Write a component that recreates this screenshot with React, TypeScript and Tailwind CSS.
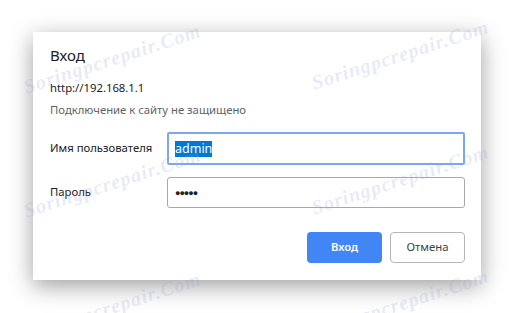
import React from "react";

const marks = [
  { left: 24, top: 72 },
  { left: 312, top: 68 },
  { left: 24, top: 196 },
  { left: 312, top: 193 },
  { left: 24, top: 320 },
  { left: 312, top: 317 },
];

function Watermark({ left, top }: { left: number; top: number }) {
  return (
    <div
      className="pointer-events-none absolute origin-left -rotate-[18deg] whitespace-nowrap text-[20px] font-bold italic tracking-[1px] text-[rgba(150,168,220,0.24)] [font-family:'Liberation_Serif',serif]"
      style={{ left, top }}
    >
      Soringpcrepair.Com
    </div>
  );
}

export default function App() {
  return (
    <div className="relative h-[313px] w-[514px] overflow-hidden bg-white pl-[33px] pt-[32px] [font-family:'Noto_Sans',sans-serif]">
      <div className="flex h-[248px] w-[448px] flex-col bg-white pl-[17px] pr-[16px] pt-[12px] shadow-[0_6px_22px_rgba(0,0,0,0.38)]">
        <div className="text-[15px] leading-[22px] text-[#202124]">Вход</div>
        <div className="mt-[14px] text-[11.3px] leading-[16px] text-[#202124]">http://192.168.1.1</div>
        <div className="mt-[6px] text-[11.3px] leading-[16px] text-[#5f6368]">
          Подключение к сайту не защищено
        </div>

        <div className="mt-[14px] flex items-center">
          <div className="w-[117px] text-[11.3px] text-[#202124]">Имя пользователя</div>
          <div className="flex h-[33px] w-[298px] items-center rounded-[2px] border-2 border-[#7aa7f0] px-[6px]">
            <span className="bg-[#0078d7] text-[12.5px] leading-[16px] text-white">admin</span>
          </div>
        </div>

        <div className="mt-[12px] flex items-center">
          <div className="w-[117px] text-[11.3px] text-[#202124]">Пароль</div>
          <div className="flex h-[31px] w-[298px] items-center rounded-[3px] border border-[#a8a8a8] px-[7px]">
            <span className="text-[9px] tracking-[-1px] text-[#202124]">●●●●●</span>
          </div>
        </div>

        <div className="mt-[24px] flex justify-end gap-[8px]">
          <button className="h-[31px] w-[75px] rounded-[4px] bg-[#4285f4] text-[11.3px] font-semibold text-white">
            Вход
          </button>
          <button className="h-[31px] w-[75px] rounded-[4px] border border-[#b5b5b5] bg-white text-[11.3px] text-[#3c4043]">
            Отмена
          </button>
        </div>
      </div>

      {marks.map((m, i) => (
        <Watermark key={i} left={m.left} top={m.top} />
      ))}
    </div>
  );
}
